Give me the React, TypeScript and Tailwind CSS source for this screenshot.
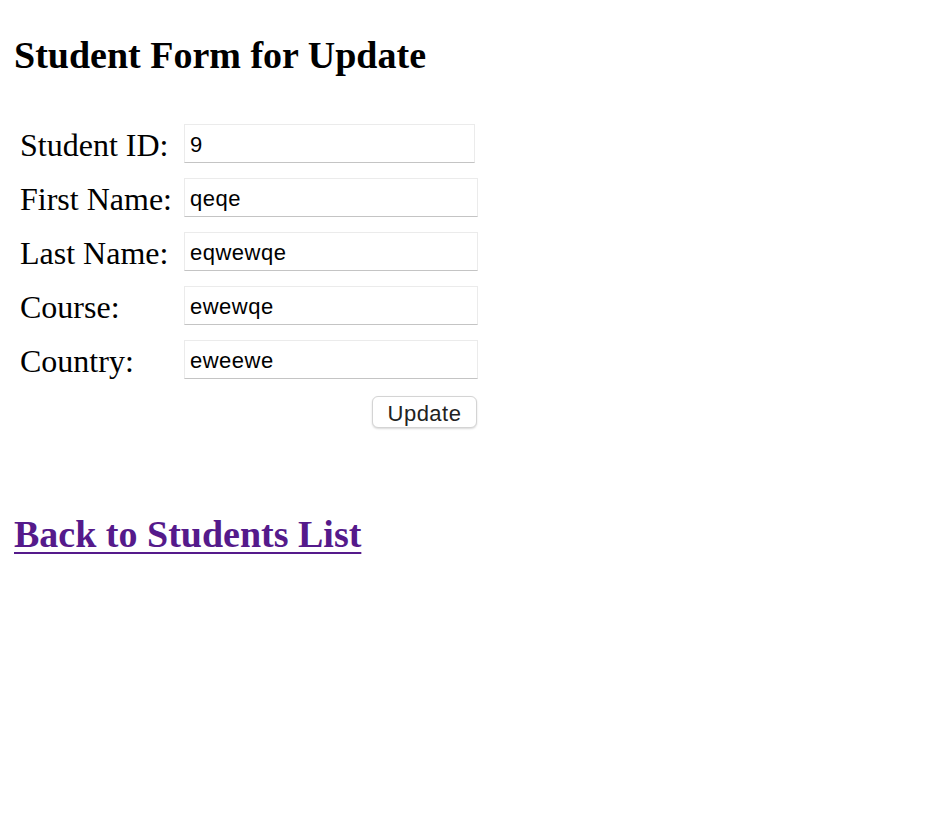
import React from "react";

const rows: { label: string; value: string; narrow?: boolean }[] = [
  { label: "Student ID:", value: "9", narrow: true },
  { label: "First Name:", value: "qeqe" },
  { label: "Last Name:", value: "eqwewqe" },
  { label: "Course:", value: "ewewqe" },
  { label: "Country:", value: "eweewe" },
];

export default function App() {
  return (
    <div className="min-h-[828px] w-[944px] bg-white pl-[14px] pt-[33px] text-black [font-family:'Liberation_Serif',serif]">
      <h1 className="text-[38px] font-bold leading-[44px]">Student Form for Update</h1>
      <form className="mt-[47px] flex flex-col" onSubmit={(e) => e.preventDefault()}>
        <div className="flex flex-col gap-[15px]">
          {rows.map((r) => (
            <div key={r.label} className="flex h-[39px] items-center">
              <label className="w-[170px] pl-[6px] pt-[2px] text-[32px] leading-[36px]">{r.label}</label>
              <input
                readOnly
                value={r.value}
                className={`${r.narrow ? "w-[291px]" : "w-[294px]"} h-[39px] border border-[#ebebeb] border-b-[#c4c4c4] bg-white pl-[5px] pt-[2px] text-[22px] tracking-[0.5px] text-black outline-none [font-family:'Liberation_Sans',Arial,sans-serif]`}
              />
            </div>
          ))}
        </div>
        <div className="mt-[17px] flex w-[463px] justify-end">
          <button
            type="submit"
            className="h-[32px] w-[105px] rounded-[6px] border border-[#d4d4d4] bg-white text-[22px] tracking-[0.5px] text-[#222] shadow-[0_1px_2px_rgba(0,0,0,0.15)] [font-family:'Liberation_Sans',Arial,sans-serif]"
          >
            Update
          </button>
        </div>
      </form>
      <a
        href="#"
        className="mt-[84px] inline-block text-[38px] font-bold leading-[44px] text-[#551a8b] underline decoration-[2px] underline-offset-[5px]"
      >
        Back to Students List
      </a>
    </div>
  );
}
